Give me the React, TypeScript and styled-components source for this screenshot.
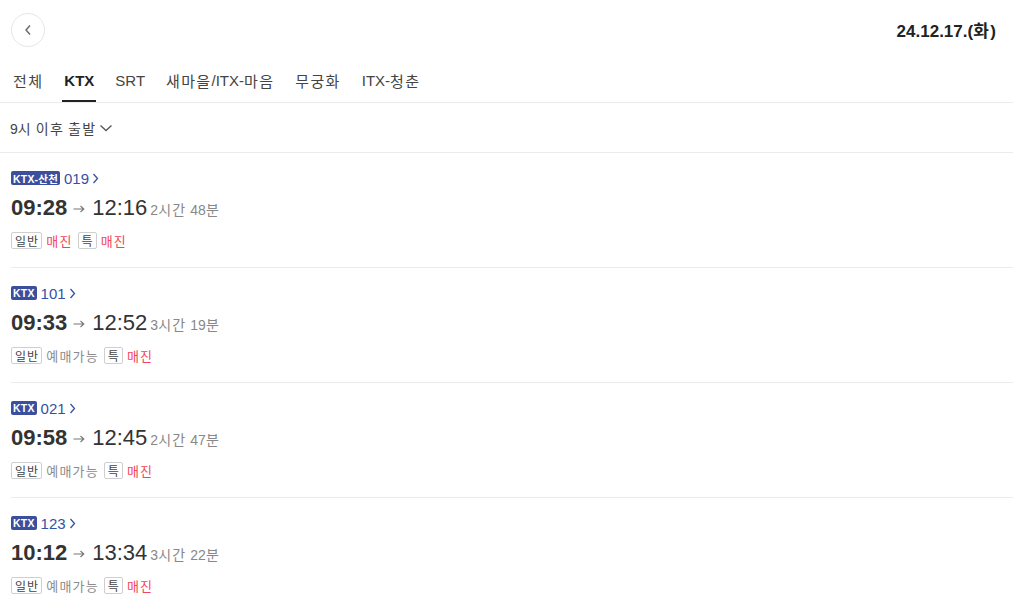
import React from "react";
import styled, { createGlobalStyle } from "styled-components";

const Global = createGlobalStyle`
  html, body { margin: 0; padding: 0; background: #fff; }
  body { font-family: "Liberation Sans", Arial, "Noto Sans CJK KR", sans-serif; color: #222; }
  * { box-sizing: border-box; }
`;

const Hangul = styled.span`
  letter-spacing: 0.09em;
`;

const ko = (text: string) =>
  text.split(/([\uAC00-\uD7A3]+)/).map((part, i) =>
    /[\uAC00-\uD7A3]/.test(part) ? <Hangul key={i}>{part}</Hangul> : <React.Fragment key={i}>{part}</React.Fragment>
  );

const Page = styled.div`
  width: 1013px;
  background: #fff;
`;

const Header = styled.header`
  height: 59px;
  display: flex;
  align-items: center;
  justify-content: space-between;
  padding: 0 17px 0 11px;
`;

const BackButton = styled.button`
  width: 34px;
  height: 34px;
  border-radius: 50%;
  border: 1px solid #e6e6e6;
  background: #fff;
  display: flex;
  align-items: center;
  justify-content: center;
  padding: 0;
  color: #666;
`;

const DateText = styled.div`
  font-size: 17px;
  font-weight: 700;
  color: #222;
`;

const TabBar = styled.nav`
  height: 44px;
  display: flex;
  align-items: stretch;
  gap: 17px;
  padding-left: 11px;
  border-bottom: 1px solid #ebebeb;
`;

const Tab = styled.div<{ $active?: boolean }>`
  display: flex;
  align-items: center;
  padding: 2px 2px 0;
  font-size: 15px;
  font-weight: ${(p) => (p.$active ? 700 : 400)};
  color: ${(p) => (p.$active ? "#222" : "#444")};
  border-bottom: 2px solid ${(p) => (p.$active ? "#222" : "transparent")};
`;

const FilterBar = styled.div`
  height: 50px;
  display: flex;
  align-items: center;
  padding-left: 10px;
  gap: 3px;
  font-size: 14px;
  color: #444;
  border-bottom: 1px solid #ebebeb;
`;

const List = styled.div`
  padding-left: 11px;
`;

const Row = styled.div`
  padding: 15px 0 17px;
  border-bottom: 1px solid #ebebeb;
  display: flex;
  flex-direction: column;
`;

const TrainLine = styled.div`
  height: 20px;
  display: flex;
  align-items: center;
  gap: 4px;
`;

const Badge = styled.span`
  display: inline-flex;
  align-items: center;
  height: 14px;
  padding: 0 2px;
  background: #3b4f9d;
  color: #fff;
  border-radius: 2px;
  font-size: 10.5px;
  font-weight: 700;
  letter-spacing: 0.2px;
`;

const TrainNo = styled.span`
  display: inline-flex;
  align-items: center;
  gap: 3px;
  font-size: 15px;
  color: #3451a5;
`;

const TimeLine = styled.div`
  height: 30px;
  margin-top: 5px;
  display: flex;
  align-items: center;
  color: #333;
`;

const Depart = styled.span`
  font-size: 22px;
  font-weight: 700;
`;

const ArrowIcon = styled.svg`
  margin: 1px 7px 0 6px;
`;

const Arrive = styled.span`
  font-size: 22px;
  font-weight: 400;
`;

const Duration = styled.span`
  font-size: 14px;
  color: #888;
  margin-left: 3px;
  padding-top: 2px;
`;

const SeatLine = styled.div`
  height: 20px;
  margin-top: 7px;
  display: flex;
  align-items: center;
`;

const SeatTag = styled.span`
  display: inline-flex;
  align-items: center;
  justify-content: center;
  height: 17px;
  padding: 0 2px 0 3px;
  border: 1px solid #cfcfcf;
  border-radius: 2px;
  font-size: 12px;
  color: #444;
  margin-right: 4px;
`;

const SeatStatus = styled.span<{ $soldOut?: boolean }>`
  font-size: 13px;
  color: ${(p) => (p.$soldOut ? "#f2445c" : "#8c8c8c")};
  margin-right: 5px;
`;

const ChevronRight = () => (
  <svg width="7" height="11" viewBox="0 0 7 11" fill="none">
    <path d="M1.5 1l4 4.5-4 4.5" stroke="#3451a5" strokeWidth="1.3" />
  </svg>
);

type Train = {
  type: string;
  no: string;
  dep: string;
  arr: string;
  dur: string;
  general: boolean;
  special: boolean;
};

const trains: Train[] = [
  { type: "KTX-산천", no: "019", dep: "09:28", arr: "12:16", dur: "2시간 48분", general: false, special: false },
  { type: "KTX", no: "101", dep: "09:33", arr: "12:52", dur: "3시간 19분", general: true, special: false },
  { type: "KTX", no: "021", dep: "09:58", arr: "12:45", dur: "2시간 47분", general: true, special: false },
  { type: "KTX", no: "123", dep: "10:12", arr: "13:34", dur: "3시간 22분", general: true, special: false },
];

const tabs = ["전체", "KTX", "SRT", "새마을/ITX-마음", "무궁화", "ITX-청춘"];

export default function App() {
  return (
    <Page>
      <Global />
      <Header>
        <BackButton aria-label="뒤로">
          <svg width="8" height="12" viewBox="0 0 8 12" fill="none">
            <path d="M6 1.5L2 6l4 4.5" stroke="#666" strokeWidth="1.4" />
          </svg>
        </BackButton>
        <DateText>{ko("24.12.17.(화)")}</DateText>
      </Header>
      <TabBar>
        {tabs.map((t) => (
          <Tab key={t} $active={t === "KTX"}>
            {ko(t)}
          </Tab>
        ))}
      </TabBar>
      <FilterBar>
        <span>{ko("9시 이후 출발")}</span>
        <svg width="14" height="10" viewBox="0 0 14 10" fill="none">
          <path d="M1.5 2.5L7 7.5l5.5-5" stroke="#555" strokeWidth="1.3" />
        </svg>
      </FilterBar>
      <List>
        {trains.map((tr) => (
          <Row key={tr.no}>
            <TrainLine>
              <Badge>{tr.type}</Badge>
              <TrainNo>
                {tr.no}
                <ChevronRight />
              </TrainNo>
            </TrainLine>
            <TimeLine>
              <Depart>{tr.dep}</Depart>
              <ArrowIcon width="12" height="8" viewBox="0 0 12 8" fill="none">
                <path d="M0.5 4h10.5M7.5 1l3.3 3-3.3 3" stroke="#777" strokeWidth="1.1" />
              </ArrowIcon>
              <Arrive>{tr.arr}</Arrive>
              <Duration>{ko(tr.dur)}</Duration>
            </TimeLine>
            <SeatLine>
              <SeatTag>{ko("일반")}</SeatTag>
              <SeatStatus $soldOut={!tr.general}>{ko(tr.general ? "예매가능" : "매진")}</SeatStatus>
              <SeatTag>{ko("특")}</SeatTag>
              <SeatStatus $soldOut={!tr.special}>{ko(tr.special ? "예매가능" : "매진")}</SeatStatus>
            </SeatLine>
          </Row>
        ))}
      </List>
    </Page>
  );
}
